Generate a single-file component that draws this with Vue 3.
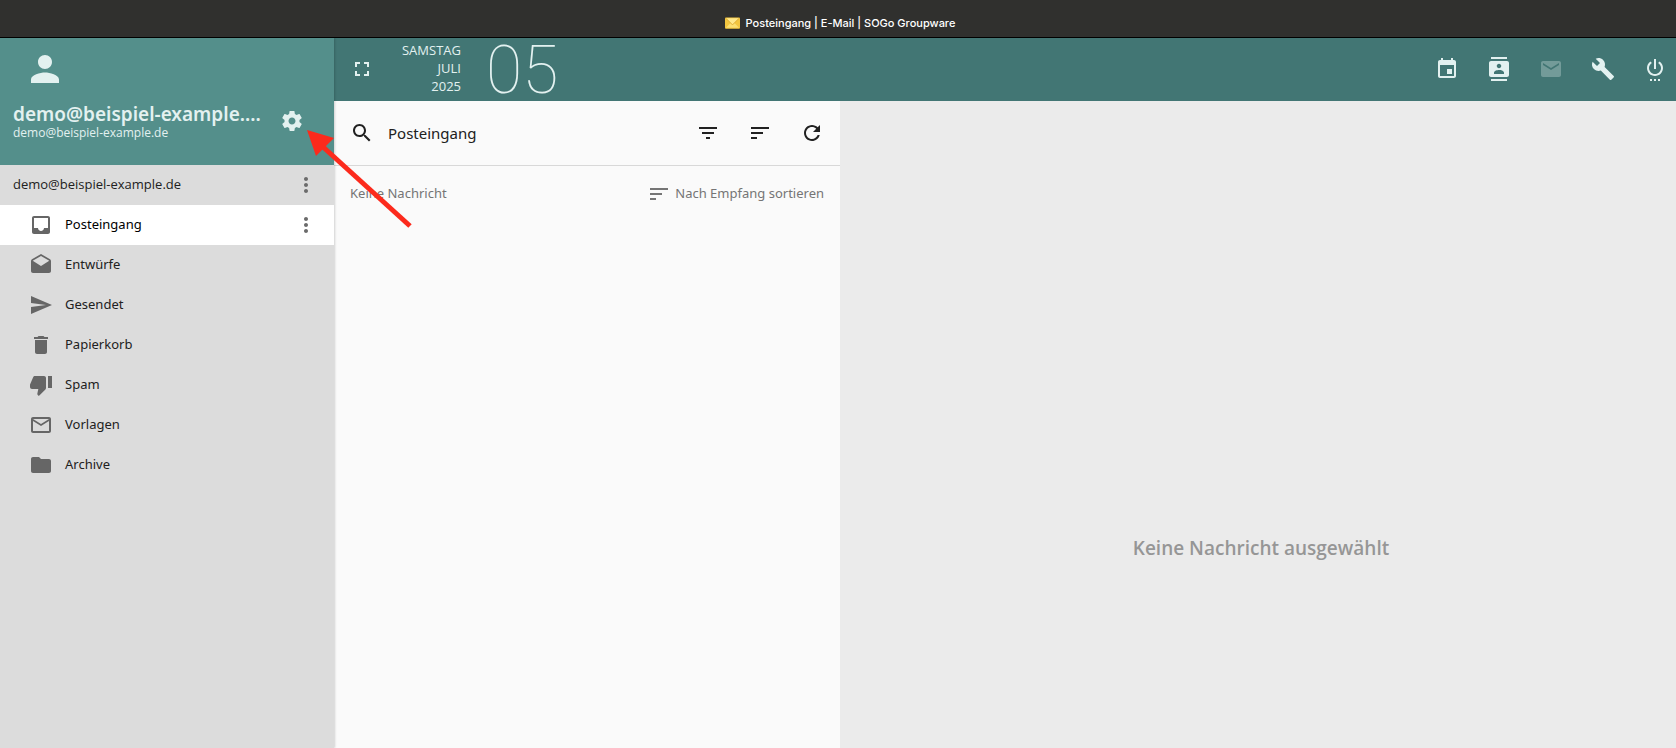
<script setup>
const icons = {
  person: 'M12 12c2.21 0 4-1.79 4-4s-1.79-4-4-4-4 1.79-4 4 1.79 4 4 4zm0 2c-2.67 0-8 1.34-8 4v2h16v-2c0-2.66-5.33-4-8-4z',
  settings: 'M19.43 12.98c.04-.32.07-.64.07-.98s-.03-.66-.07-.98l2.11-1.65c.19-.15.24-.42.12-.64l-2-3.46c-.12-.22-.39-.3-.61-.22l-2.49 1c-.52-.4-1.08-.73-1.69-.98l-.38-2.65C14.46 2.18 14.25 2 14 2h-4c-.25 0-.46.18-.49.42l-.38 2.65c-.61.25-1.17.59-1.69.98l-2.49-1c-.23-.09-.49 0-.61.22l-2 3.46c-.13.22-.07.49.12.64l2.11 1.65c-.04.32-.07.65-.07.98s.03.66.07.98l-2.11 1.65c-.19.15-.24.42-.12.64l2 3.46c.12.22.39.3.61.22l2.49-1c.52.4 1.08.73 1.69.98l.38 2.65c.03.24.24.42.49.42h4c.25 0 .46-.18.49-.42l.38-2.65c.61-.25 1.17-.59 1.69-.98l2.49 1c.23.09.49 0 .61-.22l2-3.46c.12-.22.07-.49-.12-.64l-2.11-1.65zM12 15.5c-1.93 0-3.5-1.57-3.5-3.5s1.57-3.5 3.5-3.5 3.5 1.57 3.5 3.5-1.57 3.5-3.5 3.5z',
  more: 'M12 8c1.1 0 2-.9 2-2s-.9-2-2-2-2 .9-2 2 .9 2 2 2zm0 2c-1.1 0-2 .9-2 2s.9 2 2 2 2-.9 2-2-.9-2-2-2zm0 6c-1.1 0-2 .9-2 2s.9 2 2 2 2-.9 2-2-.9-2-2-2z',
  inbox: 'M19 3H4.99c-1.11 0-1.98.89-1.98 2L3 19c0 1.1.88 2 1.99 2H19c1.1 0 2-.9 2-2V5c0-1.11-.9-2-2-2zm0 12h-4c0 1.66-1.35 3-3 3s-3-1.34-3-3H4.99V5H19v10z',
  drafts: 'M21.99 8c0-.72-.37-1.35-.94-1.7L12 1 2.95 6.3C2.38 6.65 2 7.28 2 8v10c0 1.1.9 2 2 2h16c1.1 0 2-.9 2-2l-.01-10zM12 13L3.74 7.84 12 3l8.26 4.84L12 13z',
  send: 'M2.01 21L23 12 2.01 3 2 10l15 2-15 2z',
  delete: 'M6 19c0 1.1.9 2 2 2h8c1.1 0 2-.9 2-2V7H6v12zM19 4h-3.5l-1-1h-5l-1 1H5v2h14V4z',
  thumbDown: 'M15 3H6c-.83 0-1.54.5-1.84 1.22l-3.02 7.05c-.09.23-.14.47-.14.73v1.91l.01.01L1 14c0 1.1.9 2 2 2h6.31l-.95 4.57-.03.32c0 .41.17.79.44 1.06L9.83 23l6.59-6.59c.36-.36.58-.86.58-1.41V5c0-1.1-.9-2-2-2zm4 0v12h4V3h-4z',
  mailOutline: 'M20 4H4c-1.1 0-1.99.9-1.99 2L2 18c0 1.1.9 2 2 2h16c1.1 0 2-.9 2-2V6c0-1.1-.9-2-2-2zm0 14H4V8l8 5 8-5v10zm-8-7L4 6h16l-8 5z',
  folder: 'M10 4H4c-1.1 0-1.99.9-1.99 2L2 18c0 1.1.9 2 2 2h16c1.1 0 2-.9 2-2V8c0-1.1-.9-2-2-2h-8l-2-2z',
  fullscreen: 'M7 14H5v5h5v-2H7v-3zm-2-4h2V7h3V5H5v5zm12 7h-3v2h5v-5h-2v3zM14 5v2h3v3h2V5h-5z',
  event: 'M17 12h-5v5h5v-5zM16 1v2H8V1H6v2H5c-1.11 0-1.99.9-1.99 2L3 19c0 1.1.89 2 2 2h14c1.1 0 2-.9 2-2V5c0-1.1-.9-2-2-2h-1V1h-2zm3 18H5V8h14v11z',
  contacts: 'M20 0H4v2h16V0zM4 24h16v-2H4v2zM20 4H4c-1.1 0-2 .9-2 2v12c0 1.1.9 2 2 2h16c1.1 0 2-.9 2-2V6c0-1.1-.9-2-2-2zm-8 2.75c1.24 0 2.25 1.01 2.25 2.25s-1.01 2.25-2.25 2.25S9.75 10.24 9.75 9 10.76 6.75 12 6.75zM17 17H7v-1.5c0-1.67 3.33-2.5 5-2.5s5 .83 5 2.5V17z',
  mail: 'M20 4H4c-1.1 0-1.99.9-1.99 2L2 18c0 1.1.9 2 2 2h16c1.1 0 2-.9 2-2V6c0-1.1-.9-2-2-2zm0 4l-8 5-8-5V6l8 5 8-5v2z',
  build: 'M22.7 19l-9.1-9.1c.9-2.3.4-5-1.5-6.9-2-2-5-2.4-7.4-1.3L9 6 6 9 1.6 4.7C.4 7.1.9 10.1 2.9 12.1c1.9 1.9 4.6 2.4 6.9 1.5l9.1 9.1c.4.4 1 .4 1.4 0l2.3-2.3c.5-.4.5-1.1.1-1.4z',
  power: 'M7 24h2v-2H7v2zm4 0h2v-2h-2v2zm2-22h-2v10h2V2zm3.56 2.44l-1.45 1.45C16.84 6.94 18 8.83 18 11c0 3.31-2.69 6-6 6s-6-2.69-6-6c0-2.17 1.16-4.06 2.88-5.12L7.44 4.44C5.36 5.88 4 8.28 4 11c0 4.42 3.58 8 8 8s8-3.58 8-8c0-2.72-1.36-5.12-3.44-6.56zM15 24h2v-2h-2v2z',
  search: 'M15.5 14h-.79l-.28-.27C15.41 12.59 16 11.11 16 9.5 16 5.91 13.09 3 9.5 3S3 5.91 3 9.5 5.91 16 9.5 16c1.61 0 3.09-.59 4.23-1.57l.27.28v.79l5 4.99L20.49 19l-4.99-5zm-6 0C7.01 14 5 11.99 5 9.5S7.01 5 9.5 5 14 7.01 14 9.5 11.99 14 9.5 14z',
  filter: 'M10 18h4v-2h-4v2zM3 6v2h18V6H3zm3 7h12v-2H6v2z',
  sort: 'M3 18h6v-2H3v2zM3 6v2h18V6H3zm0 7h12v-2H3v2z',
  refresh: 'M17.65 6.35C16.2 4.9 14.21 4 12 4c-4.42 0-7.99 3.58-7.99 8s3.57 8 7.99 8c3.73 0 6.84-2.55 7.73-6h-2.08c-.82 2.33-3.04 4-5.65 4-3.31 0-6-2.69-6-6s2.69-6 6-6c1.66 0 3.14.69 4.22 1.78L13 11h7V4l-2.35 2.35z'
}

const folders = [
  { name: 'Posteingang', icon: 'inbox', active: true },
  { name: 'Entwürfe', icon: 'drafts' },
  { name: 'Gesendet', icon: 'send' },
  { name: 'Papierkorb', icon: 'delete' },
  { name: 'Spam', icon: 'thumbDown' },
  { name: 'Vorlagen', icon: 'mailOutline' },
  { name: 'Archive', icon: 'folder' }
]

const modules = [
  { label: 'Kalender', icon: 'event' },
  { label: 'Adressbuch', icon: 'contacts' },
  { label: 'E-Mail', icon: 'mail', disabled: true },
  { label: 'Administration', icon: 'build' },
  { label: 'Abmelden', icon: 'power' }
]

const listActions = [
  { label: 'Filtern', icon: 'filter' },
  { label: 'Sortieren', icon: 'sort' },
  { label: 'Aktualisieren', icon: 'refresh' }
]
</script>

<template>
  <div class="window">
    <div class="titlebar">
      <svg class="envelope" viewBox="0 0 16 12" aria-hidden="true">
        <rect width="16" height="12" rx="1" fill="#f3c63f" />
        <path d="M1 11l5-5h4l5 5z" fill="#fbdf72" />
        <path d="M1 1h14L8 8z" fill="#ffe98c" />
        <path d="M1 1l7 7 7-7" fill="none" stroke="#dda92c" />
      </svg>
      <span>Posteingang | E-Mail | SOGo Groupware</span>
    </div>

    <div class="app">
      <aside class="sidebar">
        <header class="profile">
          <svg class="avatar" viewBox="0 0 24 24" aria-hidden="true"><path :d="icons.person" /></svg>
          <div class="profile-row">
            <div class="identity">
              <div class="identity-name">demo@beispiel-example....</div>
              <div class="identity-mail">demo@beispiel-example.de</div>
            </div>
            <button class="icon-button" type="button" aria-label="Einstellungen">
              <svg class="icon" viewBox="0 0 24 24"><path :d="icons.settings" /></svg>
            </button>
          </div>
        </header>

        <nav class="folders" aria-label="Ordner">
          <div class="account">
            <span class="row-label">demo@beispiel-example.de</span>
            <button class="icon-button" type="button" aria-label="Kontooptionen">
              <svg class="icon" viewBox="0 0 24 24"><path :d="icons.more" /></svg>
            </button>
          </div>
          <ul class="folder-list">
            <li v-for="f in folders" :key="f.name" class="folder" :class="{ active: f.active }">
              <a class="folder-link" href="#">
                <svg class="icon" viewBox="0 0 24 24" aria-hidden="true"><path :d="icons[f.icon]" /></svg>
                <span class="row-label">{{ f.name }}</span>
              </a>
              <button v-if="f.active" class="icon-button" type="button" aria-label="Ordneroptionen">
                <svg class="icon" viewBox="0 0 24 24"><path :d="icons.more" /></svg>
              </button>
            </li>
          </ul>
        </nav>
      </aside>

      <div class="content">
        <header class="toolbar">
          <button class="icon-button" type="button" aria-label="Vollbild">
            <svg class="icon" viewBox="0 0 24 24"><path :d="icons.fullscreen" /></svg>
          </button>
          <div class="date">
            <div class="date-text">
              <div>SAMSTAG</div>
              <div>JULI</div>
              <div>2025</div>
            </div>
            <div class="date-day">05</div>
          </div>
          <nav class="modules" aria-label="Module">
            <button v-for="m in modules" :key="m.label" class="icon-button" type="button" :aria-label="m.label" :disabled="m.disabled">
              <svg class="icon" viewBox="0 0 24 24"><path :d="icons[m.icon]" /></svg>
            </button>
          </nav>
        </header>

        <div class="panes">
          <section class="list">
            <div class="list-toolbar">
              <button class="icon-button" type="button" aria-label="Suchen">
                <svg class="icon" viewBox="0 0 24 24"><path :d="icons.search" /></svg>
              </button>
              <h1 class="list-title">Posteingang</h1>
              <div class="list-actions">
                <button v-for="a in listActions" :key="a.label" class="icon-button" type="button" :aria-label="a.label">
                  <svg class="icon" viewBox="0 0 24 24"><path :d="icons[a.icon]" /></svg>
                </button>
              </div>
            </div>
            <div class="list-info">
              <span class="row-label">Keine Nachricht</span>
              <button class="sort-button" type="button">
                <svg class="icon" viewBox="0 0 24 24" aria-hidden="true"><path :d="icons.sort" /></svg>
                <span class="row-label">Nach Empfang sortieren</span>
              </button>
            </div>
          </section>
          <main class="detail">
            <p class="empty">Keine Nachricht ausgewählt</p>
          </main>
        </div>
      </div>
    </div>

    <svg class="pointer" viewBox="0 0 106 100" aria-hidden="true">
      <path d="M15 16L103 96" stroke="#fc2a1c" stroke-width="5" fill="none" />
      <path d="M0 0L27 8L9 26z" fill="#fc2a1c" />
    </svg>
  </div>
</template>

<style>
body {
  margin: 0;
}
</style>

<style scoped>
.window {
  position: relative;
  display: flex;
  flex-direction: column;
  min-height: 100vh;
  font-family: "Open Sans", "Noto Sans", sans-serif;
  font-size: 13px;
  line-height: 18px;
  color: #212121;
}
.titlebar {
  display: flex;
  align-items: center;
  justify-content: center;
  gap: 6px;
  height: 28px;
  padding-top: 9px;
  padding-left: 4px;
  border-bottom: 1px solid #000;
  background: #30302e;
  color: #fff;
  font-family: Inter, "Liberation Sans", sans-serif;
  font-size: 11px;
  font-weight: 500;
}
.envelope {
  width: 15px;
  height: 12px;
}
.app {
  display: flex;
  flex: 1;
}
.icon {
  display: block;
  flex: none;
  width: 24px;
  height: 24px;
  fill: currentColor;
}
.icon-button {
  display: flex;
  flex: none;
  align-items: center;
  justify-content: center;
  width: 40px;
  height: 40px;
  padding: 0;
  border: 0;
  background: none;
  color: inherit;
}
.row-label {
  padding-bottom: 2px;
}
.sidebar {
  z-index: 1;
  flex: none;
  width: 334px;
  background: #dcdcdc;
  box-shadow: 1px 0 2px rgba(0, 0, 0, 0.16);
  clip-path: inset(0 -4px 0 0);
}
.profile {
  box-sizing: border-box;
  height: 127px;
  padding: 10px 22px 0 13px;
  background: #548f8b;
  color: #e3f1f0;
}
.avatar {
  display: block;
  width: 42px;
  height: 42px;
  margin-left: 11px;
  fill: currentColor;
}
.profile-row {
  display: flex;
  align-items: center;
  justify-content: space-between;
  padding-top: 11px;
}
.identity-name {
  font-family: "Noto Sans", "Open Sans", sans-serif;
  font-size: 19px;
  font-weight: 600;
  line-height: 24px;
  white-space: nowrap;
}
.identity-mail {
  font-size: 12px;
  line-height: 14px;
}
.account,
.folder {
  display: flex;
  align-items: center;
  justify-content: space-between;
  height: 40px;
  padding-right: 8px;
}
.account {
  padding-left: 13px;
}
.account .icon-button,
.folder .icon-button {
  color: #6b6b6b;
}
.folder-list {
  margin: 0;
  padding: 0;
  list-style: none;
  font-family: "Noto Sans", "Open Sans", sans-serif;
}
.folder-link {
  display: flex;
  flex: 1;
  align-items: center;
  gap: 12px;
  padding-left: 29px;
  color: #212121;
  text-decoration: none;
}
.folder-link .icon {
  color: #666;
}
.folder.active {
  background: #fff;
}
.active .folder-link {
  color: #000;
}
.content {
  display: flex;
  flex: 1;
  flex-direction: column;
  min-width: 0;
}
.toolbar {
  display: flex;
  align-items: center;
  box-sizing: border-box;
  height: 63px;
  padding: 0 1px 1px 8px;
  background: #427674;
  color: #e3f1f0;
}
.date {
  display: flex;
  align-items: center;
  margin-left: 12px;
}
.date-text {
  width: 67px;
  padding-bottom: 2px;
  text-align: right;
}
.date-day {
  margin-left: 25px;
  padding-top: 4px;
  font-family: Roboto, "Open Sans", sans-serif;
  font-size: 66px;
  font-weight: 100;
  line-height: 60px;
}
.modules {
  display: flex;
  gap: 12px;
  margin-left: auto;
}
.modules .icon-button:disabled {
  opacity: 0.3;
}
.panes {
  display: flex;
  flex: 1;
}
.list {
  flex: none;
  width: 506px;
  background: #fafafa;
}
.list-toolbar {
  display: flex;
  align-items: center;
  height: 64px;
  padding: 0 8px;
  border-bottom: 1px solid #d8d8d8;
}
.list-title {
  margin: 0 0 0 6px;
  font-family: "Noto Sans", "Open Sans", sans-serif;
  font-size: 15px;
  font-weight: 400;
}
.list-actions {
  display: flex;
  gap: 12px;
  margin-left: auto;
}
.list-info {
  display: flex;
  align-items: center;
  justify-content: space-between;
  padding: 16px 16px 0;
  color: #757575;
  font-family: "Noto Sans", "Open Sans", sans-serif;
}
.sort-button {
  display: flex;
  align-items: center;
  gap: 4px;
  padding: 0;
  border: 0;
  background: none;
  color: inherit;
  font: inherit;
}
.detail {
  flex: 1;
  background: #ebebeb;
}
.empty {
  margin: 435px 0 0;
  padding-left: 6px;
  color: #969696;
  font-size: 19px;
  font-weight: 600;
  line-height: 24px;
  text-align: center;
}
.pointer {
  position: absolute;
  z-index: 2;
  top: 130px;
  left: 307px;
  width: 106px;
  height: 100px;
  pointer-events: none;
}
</style>
